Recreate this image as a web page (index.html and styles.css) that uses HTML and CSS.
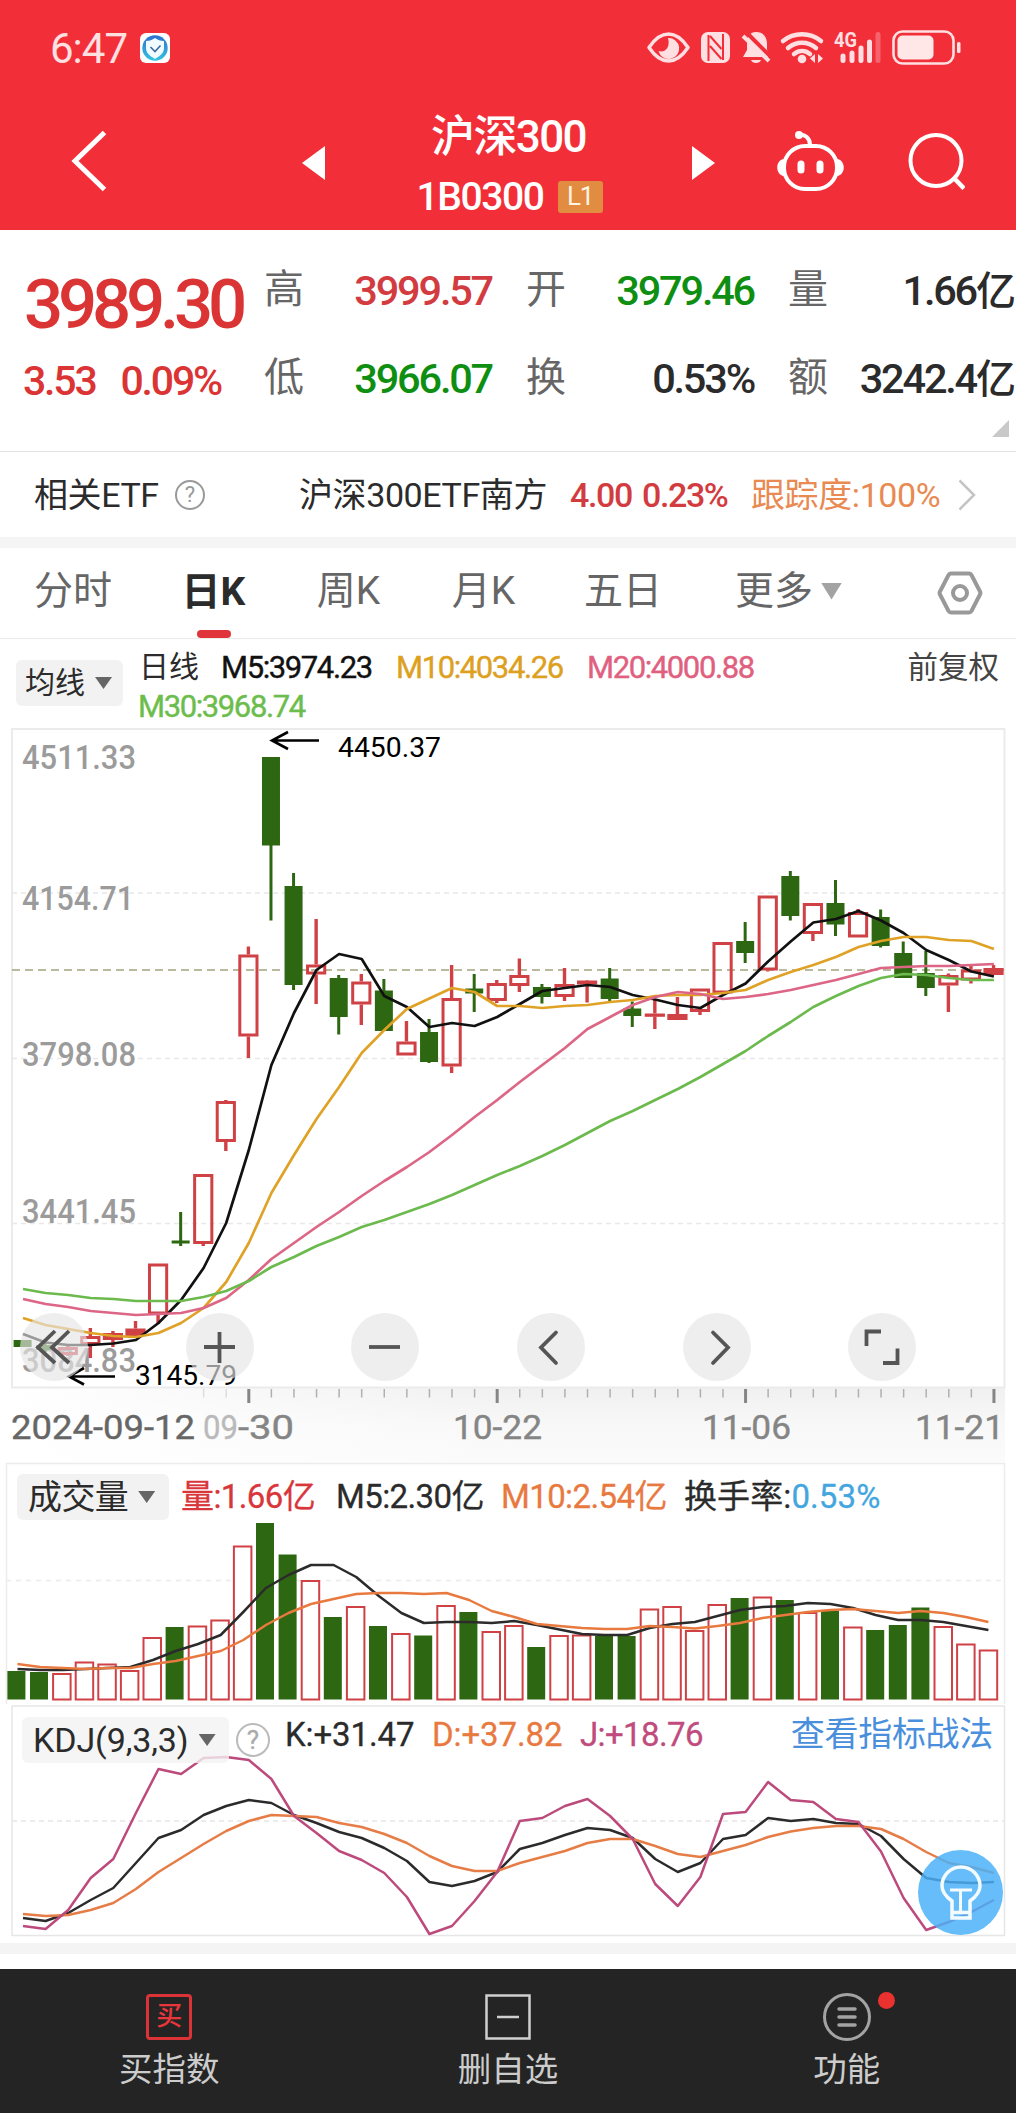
FILE: index.html
```html
<!DOCTYPE html>
<html lang="zh-CN">
<head>
  <meta charset="UTF-8">
  <title>沪深300</title>
  <link rel="stylesheet" href="styles.css">
</head>
<body>

  <header class="header">
    <div class="status-bar">
      <span class="clock">6:47</span>
      <svg class="shield" width="30" height="30" viewBox="0 0 30 30">
        <defs>
          <linearGradient id="shieldFill" x1="0" y1="0" x2="0" y2="1">
            <stop offset="0" stop-color="#2f6fd0"/>
            <stop offset="1" stop-color="#35c5e0"/>
          </linearGradient>
        </defs>
        <rect width="30" height="30" rx="6" fill="#fff"/>
        <circle cx="15" cy="15" r="12.7" fill="url(#shieldFill)"/>
        <path d="M15 5c3 2 5 3 9 3v7c0 5-4 8-9 11-5-3-9-6-9-11V8c4 0 6-1 9-3z" fill="#f2fbff"/>
        <path d="M10.5 14l4.5 4.500 5.500-6" fill="none" stroke="#3b6c9c" stroke-width="1.600"/>
      </svg>
      <svg class="status-icons" width="320" height="40" viewBox="642 28 320 40">
        <g fill="none" stroke="#ffdfe1" stroke-width="3.500">
          <path d="M649 47.500C661 29.500 676 29.500 688 47.500C676 65.500 661 65.500 649 47.500z" stroke-linejoin="round"/>
        </g>
        <path d="M668 38a10.500 10.500 0 1 1-9.500 13c7 2 12-4 9.500-13z" fill="#ffdfe1"/>
        <rect x="701" y="32" width="29" height="31" rx="7" fill="#ffdfe1"/>
        <path d="M708.500 35v26M723 34v26M710 36l11.500 13M710 46l11.500 13" stroke="#f22f39" stroke-width="2"/>
        <path d="M756 32c8 0 11 6 11 12v6l4 7h-28l4-7v-6c0-6 2-12 9-12zM751 60h10c-1 4-9 4-10 0z" fill="#ffdfe1"/>
        <path d="M747 33l26 26" stroke="#f22f39" stroke-width="4"/>
        <path d="M743 36l26 25" stroke="#ffdfe1" stroke-width="4"/>
        <g fill="none" stroke="#ffdfe1" stroke-width="4.500" stroke-linecap="round">
          <path d="M783 41c11-9 27-9 38 0M788 48c8-7 20-7 28 0M794 54c5-4 11-4 16 0"/>
        </g>
        <circle cx="802" cy="59" r="4.300" fill="#ffdfe1"/>
        <path d="M815 54v9l-5-4.500zM818 54v9l5-4.500z" fill="#ffdfe1"/>
        <text x="834" y="46.500" class="net" textLength="23" lengthAdjust="spacingAndGlyphs">4G</text>
        <g stroke="#ffdfe1" stroke-width="5" stroke-linecap="round">
          <path d="M843 56v4.500M852 53v7.500M861 48v12.500M869.500 42v18.500"/>
          <path d="M878 34.500v26" opacity=".3"/>
        </g>
        <rect x="893.500" y="31.500" width="60" height="32" rx="9" fill="none" stroke="#ffdfe1" stroke-width="2.600"/>
        <rect x="897.500" y="35.500" width="36" height="24" rx="5" fill="#ffe6e7"/>
        <rect x="957" y="42" width="3.500" height="11" rx="1.500" fill="#ffdfe1"/>
      </svg>
    </div>

    <div class="nav">
      <svg width="36" height="64" viewBox="0 0 36 64"><path d="M33.500 3.500L4 32l29.500 28.500" fill="none" stroke="#fff" stroke-width="5"/></svg>
      <svg class="prev" width="23" height="34" viewBox="0 0 23 34"><path d="M23 0v34L0 17z" fill="#fff"/></svg>
      <div class="nav-title">
        <div class="name">沪深300</div>
        <div class="code">1B0300<span class="level">L1</span></div>
      </div>
      <svg class="next" width="23" height="34" viewBox="0 0 23 34"><path d="M0 0v34l23-17z" fill="#fff"/></svg>
      <svg class="robot" width="68" height="62" viewBox="776 131 68 62">
        <g fill="none" stroke="#fff" stroke-width="4">
          <rect x="784" y="147" width="53" height="43" rx="21"/>
          <path d="M799 136c6-1 11 3 11 10"/>
        </g>
        <circle cx="799" cy="136" r="4" fill="#fff"/>
        <path d="M784 160c-9 1-9 16 0 17zM837 160c9 1 9 16 0 17z" fill="#fff"/>
        <path d="M801 165v6M820 165v6" stroke="#fff" stroke-width="7" stroke-linecap="round"/>
      </svg>
      <svg class="search" width="58" height="58" viewBox="907 133 58 58">
        <circle cx="936" cy="161.500" r="25.500" fill="none" stroke="#fff" stroke-width="4"/>
        <path d="M953 178l11 11.500" stroke="#fff" stroke-width="4.500"/>
      </svg>
    </div>
  </header>

  <section class="quote">
    <div class="quote-main">
      <div class="price">3989.30</div>
      <div class="change"><span>3.53</span><span>0.09%</span></div>
    </div>
    <div class="quote-grid">
      <div class="cell"><span class="label">高</span><span class="up">3999.57</span></div>
      <div class="cell"><span class="label">开</span><span class="down">3979.46</span></div>
      <div class="cell"><span class="label">量</span><span>1.66<em>亿</em></span></div>
      <div class="cell"><span class="label">低</span><span class="down">3966.07</span></div>
      <div class="cell"><span class="label">换</span><span>0.53%</span></div>
      <div class="cell"><span class="label">额</span><span>3242.4<em>亿</em></span></div>
    </div>
    <svg class="corner" width="17" height="17" viewBox="0 0 17 17"><path d="M17 0v17H0z" fill="#c9c9c9"/></svg>
  </section>

  <section class="etf">
    <span class="etf-label">相关ETF</span>
    <span class="help">?</span>
    <span class="etf-name">沪深300ETF南方</span>
    <span class="etf-price">4.00</span>
    <span class="etf-rate">0.23%</span>
    <span class="etf-track">跟踪度:100%</span>
    <svg width="18" height="32" viewBox="0 0 18 32"><path d="M1.500 1.500L16 16 1.500 30.500" fill="none" stroke="#c4c4c4" stroke-width="2.500"/></svg>
  </section>

  <nav class="tabs">
    <div class="tab tab-wide">分时</div>
    <div class="tab active">日K</div>
    <div class="tab">周K</div>
    <div class="tab">月K</div>
    <div class="tab tab-five">五日</div>
    <div class="tab-more">更多<i class="caret"></i></div>
    <svg class="setting" width="46" height="44" viewBox="0 0 46 44">
      <path d="M14 2.500h18q1.500 0 2.500 1.500l8.500 16.500q.8 1.500 0 3L34.500 40q-1 1.500-2.500 1.500H14q-1.500 0-2.500-1.500L3 23.500q-.8-1.500 0-3L11.500 4q1-1.500 2.500-1.500z" fill="none" stroke="#999" stroke-width="4"/>
      <circle cx="23" cy="22" r="7" fill="none" stroke="#999" stroke-width="4"/>
    </svg>
  </nav>

  <section class="ma-bar">
    <div class="picker">均线<i class="caret"></i></div>
    <div class="ma-list">
      <span class="period">日线</span>
      <span class="m5">M5:3974.23</span>
      <span class="m10">M10:4034.26</span>
      <span class="m20">M20:4000.88</span>
      <span class="m30">M30:3968.74</span>
    </div>
    <div class="adjust">前复权</div>
  </section>

  <section class="panel">
    <svg id="kline" width="1016" height="734" viewBox="0 728 1016 734"></svg>
    <div class="tools">
      <button><svg viewBox="0 0 68 68"><path d="M35 18L18 34.500 35 50M49 18L32 34.500 49 50"/></svg></button>
      <button><svg viewBox="0 0 68 68"><path d="M18 34h31M33.500 19v31"/></svg></button>
      <button><svg viewBox="0 0 68 68"><path d="M18 34h31"/></svg></button>
      <button><svg viewBox="0 0 68 68"><path d="M39 19.500L24 34.500 39 50" stroke-linecap="round"/></svg></button>
      <button><svg viewBox="0 0 68 68"><path d="M30 19.500L45 34.500 30 50" stroke-linecap="round"/></svg></button>
      <button><svg viewBox="0 0 68 68"><path d="M18.500 33V18.500H33M49.500 35.500V50H35"/></svg></button>
    </div>
  </section>

  <section class="panel volume">
    <svg id="volume" width="1016" height="242" viewBox="0 1462 1016 242"></svg>
    <div class="panel-head">
      <div class="picker">成交量<i class="caret"></i></div>
      <span class="v-now">量:1.66亿</span>
      <span class="v-m5">M5:2.30亿</span>
      <span class="v-m10">M10:2.54亿</span>
      <span class="v-turn">换手率:<b>0.53%</b></span>
    </div>
  </section>

  <section class="panel kdj">
    <svg id="kdj" width="1016" height="236" viewBox="0 1704 1016 236"></svg>
    <div class="panel-head">
      <div class="picker">KDJ(9,3,3)<i class="caret"></i></div>
      <span class="help">?</span>
      <span class="k">K:+31.47</span>
      <span class="d">D:+37.82</span>
      <span class="j">J:+18.76</span>
      <a class="guide">查看指标战法</a>
    </div>
    <div class="tip">
      <svg width="42" height="56" viewBox="0 0 42 56">
        <g fill="none" stroke="#f4fbff" stroke-width="3.500">
          <path d="M12 40V36C5 31 2 27 2 21a19 19 0 0 1 38 0c0 6-3 10-10 15v17H12V40zM12 47.500h18"/>
          <path d="M10 25h22M20.500 25v22" stroke-width="3"/>
        </g>
      </svg>
    </div>
  </section>

  <footer class="footer">
    <div class="action">
      <span class="icon-buy">买</span>
      <span>买指数</span>
    </div>
    <div class="action">
      <svg width="46" height="46" viewBox="0 0 46 46"><path d="M1.500 1.500h43v43h-43zM12 23h22" fill="none" stroke="#cfcfcf" stroke-width="2.500"/></svg>
      <span>删自选</span>
    </div>
    <div class="action">
      <div class="icon-menu">
        <svg width="50" height="50" viewBox="0 0 50 50">
          <circle cx="25" cy="25" r="22.500" fill="none" stroke="#a3a3a3" stroke-width="3"/>
          <path d="M17 17h16M17 25h16M17 33h16" stroke="#a3a3a3" stroke-width="3.500" stroke-linecap="round"/>
        </svg>
        <i class="dot"></i>
      </div>
      <span>功能</span>
    </div>
  </footer>

  <script src="chart.js"></script>
</body>
</html>
```
FILE: styles.css
```css
body {
  margin: 0;
  width: 1016px;
  background-color: #fff;
  color: #2b2b2b;
  font-family: Roboto, "Noto Sans CJK SC", sans-serif;
}
svg {
  display: block;
  flex: none;
}
span, a {
  white-space: nowrap;
}

/* header */
.header {
  height: 230px;
  background-color: #f22f39;
  color: #fff;
}
.status-bar {
  display: flex;
  align-items: center;
  height: 96px;
}
.clock {
  width: 88px;
  padding-left: 50px;
  font-size: 42px;
  letter-spacing: -1px;
  color: #ffe0e1;
}
.shield {
  margin-left: 2px;
}
.status-icons {
  margin-left: auto;
  margin-right: 54px;
}
.net {
  font-size: 21px;
  font-weight: 700;
  fill: #ffdfe1;
}
.nav {
  display: flex;
  align-items: center;
  height: 130px;
  padding-left: 71px;
}
.prev {
  margin-left: 195px;
  margin-top: 3px;
}
.nav-title {
  width: 367px;
  text-align: center;
}
.name {
  font-size: 44px;
  line-height: 60px;
  margin-top: 12px;
  letter-spacing: -1.6px;
  font-weight: 500;
}
.code {
  display: flex;
  align-items: center;
  justify-content: center;
  font-size: 39px;
  line-height: 60px;
  font-weight: 500;
  letter-spacing: -1.4px;
  padding-left: 2px;
}
.level {
  width: 45px;
  height: 32px;
  margin-left: 14px;
  border-radius: 3px;
  background-color: #e28c42;
  color: #fff3e2;
  font-size: 26px;
  font-weight: 400;
  line-height: 31px;
}
.next {
  margin-top: 3px;
}
.robot {
  margin-left: 61px;
}
.search {
  margin-left: 63px;
}

/* quote */
.quote {
  display: flex;
  height: 221px;
  border-bottom: 1px solid #e2e2e2;
}
.quote-main {
  width: 240px;
  padding-left: 24px;
  color: #db3434;
}
.price {
  margin-top: 35px;
  font-size: 69px;
  line-height: 80px;
  font-weight: 500;
  letter-spacing: -5.2px;
}
.change {
  display: flex;
  gap: 25px;
  margin: 11px 0 0 -1px;
  font-size: 41px;
  line-height: 50px;
  font-weight: 500;
  letter-spacing: -2.2px;
}
.quote-grid {
  display: grid;
  grid-template-columns: repeat(3, 228px);
  grid-auto-rows: 88px;
  column-gap: 34px;
  margin-top: 17px;
}
.cell {
  display: flex;
  align-items: center;
  justify-content: space-between;
  font-size: 41.5px;
  line-height: 50px;
  font-weight: 500;
  letter-spacing: -2.2px;
}
.cell em {
  font-style: normal;
  font-size: 40px;
  letter-spacing: 0;
}
.label {
  margin-bottom: 3px;
  color: #666;
  font-size: 40px;
  font-weight: 400;
  letter-spacing: 0;
}
.up {
  color: #d23c40;
}
.down {
  color: #0f8f12;
}
.corner {
  align-self: flex-end;
  margin: 0 0 14px -24px;
}

/* related etf */
.etf {
  display: flex;
  align-items: center;
  height: 85px;
  padding-left: 34px;
  font-size: 34px;
  line-height: 42px;
  letter-spacing: -.4px;
  border-bottom: 11px solid #f5f5f5;
}
.help {
  box-sizing: border-box;
  width: 30px;
  height: 30px;
  border: 2px solid #999;
  border-radius: 50%;
  font-size: 22px;
  line-height: 26px;
  letter-spacing: 0;
  text-align: center;
  color: #999;
}
.etf-label {
  width: 141px;
}
.etf-name {
  width: 271px;
  margin-left: 94px;
}
.etf-price {
  width: 72px;
  color: #d23c40;
  font-weight: 500;
  letter-spacing: -1.4px;
}
.etf-rate {
  width: 109px;
  color: #d23c40;
  font-weight: 500;
  letter-spacing: -1.4px;
}
.etf-track {
  width: 207px;
  color: #e88a52;
}

/* tabs */
.tabs {
  display: flex;
  align-items: center;
  height: 90px;
  border-bottom: 1px solid #ebebeb;
  font-size: 39px;
  line-height: 58px;
  color: #666;
}
.tab {
  box-sizing: border-box;
  display: flex;
  align-items: center;
  justify-content: center;
  width: 135px;
  height: 90px;
  padding-bottom: 4px;
}
.tab-wide {
  width: 146px;
}
.tab-five {
  padding-left: 9px;
}
.active {
  flex-direction: column;
  justify-content: flex-end;
  padding-bottom: 0;
  color: #2b2b2b;
  font-weight: 700;
}
.active::after {
  content: "";
  width: 34px;
  height: 8px;
  margin-top: 9px;
  border-radius: 4px;
  background-color: #e0343a;
}
.tab-more {
  display: flex;
  align-items: center;
  width: 202px;
  padding: 0 0 4px 49px;
}
.caret {
  width: 17px;
  height: 12px;
  margin-left: 10px;
  background-color: #666;
  clip-path: polygon(0 0, 100% 0, 50% 100%);
}
.tab-more .caret {
  width: 21px;
  height: 17px;
  margin-left: 8px;
  background-color: #a3a3a3;
}

/* moving averages */
.ma-bar {
  display: flex;
  height: 89px;
  padding: 0 17px;
}
.picker {
  box-sizing: border-box;
  display: flex;
  align-items: center;
  height: 46px;
  border-radius: 6px;
  background-color: #f2f2f2;
  color: #2b2b2b;
}
.ma-bar .picker {
  width: 107px;
  margin: 21px 0 0 -1px;
  padding-left: 9px;
  font-size: 30px;
  line-height: 44px;
}
.ma-list {
  display: flex;
  flex-wrap: wrap;
  align-content: flex-start;
  width: 700px;
  margin-left: 15px;
  padding-top: 9px;
  font-size: 31px;
  line-height: 39px;
  letter-spacing: -1.4px;
}
.period {
  width: 82px;
  padding-left: 1px;
  font-size: 30px;
  line-height: 37px;
  letter-spacing: 0;
}
.m5 {
  width: 175px;
  color: #111;
}
.m10 {
  width: 191px;
  color: #dda01f;
}
.m20 {
  width: 200px;
  color: #df607f;
}
.m30 {
  color: #6cbd4c;
}
.m5, .m10, .m20, .m30 {
  -webkit-text-stroke: .4px currentColor;
}
.adjust {
  margin-left: auto;
  padding-top: 4px;
  font-size: 30.5px;
  color: #444;
}

/* chart panels: drawing and its controls share one grid cell */
.panel {
  display: grid;
}
.panel > * {
  grid-area: 1 / 1;
}
.tools {
  display: flex;
  align-self: start;
  gap: 97.7px;
  margin: 584.5px 0 0 20px;
}
.tools button {
  width: 68px;
  height: 68px;
  padding: 0;
  border: none;
  border-radius: 50%;
  background-color: rgba(229, 229, 229, .65);
}
.tools svg {
  fill: none;
  stroke: #555;
  stroke-width: 3.8;
}
.panel-head {
  display: flex;
  align-self: start;
  font-size: 33px;
  line-height: 44px;
  letter-spacing: -.6px;
}
.panel-head span {
  -webkit-text-stroke: .3px currentColor;
}
.volume .panel-head {
  margin: 12px 0 0 17px;
}
.volume .picker {
  width: 152px;
  padding-left: 11px;
  font-size: 34px;
}
.v-now {
  width: 155px;
  margin-left: 12px;
  color: #d9363b;
}
.v-m5 {
  width: 165px;
}
.v-m10 {
  width: 183px;
  color: #e8793f;
}
.v-now, .v-m5, .v-m10, .v-turn {
  padding-top: 1px;
}
.v-turn {
  letter-spacing: .1px;
}
.v-turn b {
  font-weight: 400;
  color: #43a6de;
}
.kdj .panel-head {
  margin: 13px 23px 0 22px;
}
.kdj .picker {
  width: 207px;
  padding-left: 11px;
  font-size: 34px;
  letter-spacing: -.1px;
  background-color: rgba(242, 242, 242, .8);
}
.kdj .help {
  width: 34px;
  height: 34px;
  margin: 6px 0 0 7px;
  border-color: #bbb;
  font-size: 26px;
  line-height: 30px;
  color: #aaa;
}
.k, .d, .j {
  margin-top: -4px;
  letter-spacing: -.1px;
}
.k {
  width: 147px;
  margin-left: 15px;
}
.d {
  width: 148px;
  color: #e8793f;
}
.j {
  color: #c04b7c;
  letter-spacing: -.6px;
}
.guide {
  margin: -5px 0 0 auto;
  font-size: 34px;
  letter-spacing: -.3px;
  color: #4a8fdc;
}
.tip {
  display: flex;
  align-items: center;
  justify-content: center;
  align-self: end;
  justify-self: end;
  width: 85px;
  height: 85px;
  margin: 0 13px 5px 0;
  border-radius: 50%;
  background-color: rgba(74, 176, 248, .84);
}

/* footer */
.kdj {
  border-bottom: 15px solid #fff;
}
.kdj::after {
  content: "";
  grid-area: 2 / 1;
  height: 14px;
  background: linear-gradient(#fff 3px, #f4f4f4 3px);
}
.footer {
  display: flex;
  justify-content: space-around;
  height: 144px;
  background-color: #242424;
  color: #ccc;
  font-size: 33.5px;
}
.action {
  display: flex;
  flex-direction: column;
  align-items: center;
  flex: 1;
  padding-top: 25px;
}
.action > span:last-child {
  margin-top: 4px;
  line-height: 52px;
}
.icon-buy {
  box-sizing: border-box;
  width: 46px;
  height: 46px;
  border: 3px solid #dc3338;
  border-radius: 4px;
  color: #e8363b;
  font-size: 26px;
  font-weight: 500;
  line-height: 39px;
  text-align: center;
}
.icon-menu {
  position: relative;
  margin: -2px 0;
}
.dot {
  position: absolute;
  left: 56px;
  top: 0;
  width: 17px;
  height: 17px;
  border-radius: 50%;
  background-color: #e9312f;
}

/* chart text */
.axis-y {
  font-size: 33px;
  font-weight: 500;
  fill: #9b9b9b;
}
.axis-x {
  font-size: 33px;
  fill: #858585;
  stroke: #858585;
  stroke-width: .4px;
}
.axis-x.start {
  fill: #666;
  stroke: #666;
}
.mark {
  font-size: 28px;
  fill: #000;
}
```
FILE: chart.js
```js
const RED = '#cf4145';
const GREEN = '#2e6711';
const STEP = 22.58;

// [direction, high, body top, body bottom, low]
const candles = [
  ['g', 1340, 1340, 1347, 1347], ['g', 1342, 1345, 1350, 1352], ['r', 1345, 1347, 1355, 1356],
  ['r', 1328, 1336, 1345, 1358], ['r', 1331, 1333, 1340, 1347], ['r', 1321, 1328.5, 1336, 1337],
  ['r', 1263.5, 1263.5, 1314.5, 1324], ['g', 1212, 1240.5, 1243.5, 1246], ['r', 1174, 1174, 1244, 1246],
  ['r', 1100, 1101, 1142, 1151], ['r', 946.5, 954.5, 1036.5, 1058], ['g', 757, 757, 845.5, 920.5],
  ['g', 873, 886, 985, 990], ['r', 919, 964.5, 974.5, 1004], ['g', 975, 978, 1017, 1034.5],
  ['r', 974, 981.5, 1004.5, 1025], ['g', 979, 990.5, 1031, 1031], ['r', 1021, 1041.5, 1055.5, 1055.5],
  ['g', 1019, 1032, 1062, 1063], ['r', 965, 998, 1066.5, 1073], ['g', 974, 988.5, 993.5, 1012],
  ['r', 980, 983, 1001, 1003], ['r', 958.5, 975, 986, 992], ['g', 984, 987, 997, 1003.5],
  ['r', 968, 984, 997, 1001], ['r', 980, 980.5, 984.5, 1002.5], ['g', 968, 978.5, 999, 1001],
  ['g', 1001.5, 1008.5, 1016, 1027], ['r', 1000, 1013.5, 1016.5, 1029], ['r', 997, 1014, 1020, 1020],
  ['r', 988.5, 988.5, 1012, 1015], ['r', 942, 942, 993.5, 993.5], ['g', 922, 941, 953, 963],
  ['r', 895.5, 895.5, 970.5, 971.5], ['g', 871, 876, 916, 920.5], ['r', 903, 903, 934, 941],
  ['g', 880, 903, 924.5, 936], ['r', 909, 912, 937.5, 937.5], ['g', 909.5, 917, 946, 947.5],
  ['g', 941.5, 953, 978, 978], ['g', 951, 973, 988, 996], ['r', 973.5, 975, 985.5, 1012],
  ['r', 965.5, 969.5, 980.5, 983.5], ['r', 965, 968, 975, 975]
];

const ma5 = [1334, 1342.5, 1345, 1345, 1343.5, 1340, 1323, 1300, 1268, 1223, 1150, 1065, 1013, 970, 954, 959, 996, 1007, 1027, 1023, 1026, 1017, 1004, 991, 988, 985, 987, 995, 999.5, 1005, 1008, 995, 983.5, 961.5, 941.5, 922.5, 919, 911, 920.5, 933, 950, 960, 971.5, 976.5];
const ma10 = [1318, 1325, 1329, 1333, 1336, 1337, 1333, 1323, 1308, 1282, 1243, 1193, 1155, 1119, 1087, 1053, 1030, 1009, 998.5, 988, 992, 1006, 1006, 1008, 1006, 1005, 1002, 1000, 996, 995, 995, 993, 990, 980, 972, 965, 957, 947, 941, 937, 937, 940, 941, 949];
const ma20 = [1299, 1304, 1307, 1311, 1313, 1315, 1314, 1313, 1308, 1298, 1280, 1259, 1243, 1227, 1212, 1196, 1181, 1167, 1152, 1135, 1117, 1100, 1082, 1065, 1048, 1029, 1017, 1005, 997, 992, 994, 999, 997, 994, 990, 985, 980, 974, 968, 967, 966, 966, 965, 964];
const ma30 = [1289, 1293, 1295, 1298, 1299, 1301, 1301, 1301, 1297, 1291, 1281, 1267, 1257, 1246, 1237, 1227, 1220, 1212, 1204, 1195, 1185, 1175, 1166, 1156, 1145, 1133, 1121, 1111, 1100, 1089, 1077, 1064, 1051, 1036, 1022, 1007, 996, 986, 978, 974, 975, 978, 980, 980];

const volumes = [1671, 1672, 1673, 1661.5, 1663.5, 1670, 1637, 1627, 1625.5, 1619.5, 1545.5, 1523, 1554.5, 1580, 1617, 1606, 1626, 1633, 1635.5, 1605, 1612, 1631, 1625, 1647, 1635, 1634.5, 1636, 1636, 1608.5, 1606, 1630, 1604, 1598, 1596.5, 1600, 1612, 1611, 1626.5, 1630, 1625, 1607.5, 1626, 1643.5, 1649.5];
const vol5 = [1669, 1670, 1670, 1669, 1668, 1667, 1660, 1651, 1644, 1635, 1612, 1588, 1575, 1565, 1565, 1577, 1596, 1613, 1623, 1622, 1622, 1623, 1621, 1625, 1629.5, 1634, 1635, 1635, 1628, 1624, 1622, 1616, 1610, 1607, 1606, 1603, 1604, 1608, 1615, 1620, 1620, 1622, 1626, 1630];
const vol10 = [1664, 1667, 1668, 1669, 1668, 1668, 1664, 1661, 1656, 1651, 1640, 1625, 1613, 1604, 1599, 1594, 1593, 1593, 1594, 1593, 1600, 1611, 1617, 1624, 1626, 1628, 1629, 1629, 1626, 1627, 1628.5, 1626, 1623, 1618, 1615, 1612, 1610, 1609, 1611, 1613, 1611, 1613, 1617, 1622];

const kLine = [1918, 1921, 1913, 1900, 1888, 1863, 1838, 1830, 1815, 1806, 1800, 1803, 1815, 1823, 1832, 1838, 1848, 1861, 1882, 1886, 1881, 1872, 1849, 1843, 1835, 1828, 1830, 1838, 1859, 1872, 1863, 1839, 1835, 1818, 1821, 1819, 1823, 1824, 1836, 1859, 1878, 1882, 1883, 1882];
const dLine = [1914, 1916, 1915, 1910, 1903, 1889, 1872, 1858, 1844, 1831, 1821, 1815, 1816, 1817, 1823, 1827, 1834, 1843, 1856, 1866, 1871, 1871, 1863, 1857, 1851, 1843, 1839, 1839, 1846, 1854, 1857, 1851, 1845, 1837, 1831.5, 1828, 1826, 1826, 1829, 1839, 1852, 1863, 1867, 1873];
const jLine = [1926, 1929, 1910, 1878, 1859, 1813, 1769, 1774, 1758, 1757, 1760, 1779, 1816, 1833, 1851, 1860, 1873, 1897, 1934, 1926, 1901, 1872, 1821, 1818, 1806, 1799, 1816, 1839, 1884, 1906, 1877, 1814, 1812, 1782, 1800, 1802, 1819, 1822, 1851.5, 1898, 1930, 1922, 1912, 1900];

function rect(x, y, w, h, attrs) {
  return `<rect x="${x}" y="${y}" width="${w}" height="${h}" ${attrs}/>`;
}

function line(x1, y1, x2, y2, color, width, dash) {
  return `<path d="M${x1} ${y1}L${x2} ${y2}" stroke="${color}" stroke-width="${width}" ${dash ? `stroke-dasharray="${dash}"` : ''}/>`;
}

function curve(data, x0, color, width) {
  const points = data.map((y, i) => `${(x0 + i * STEP).toFixed(1)},${y}`).join(' ');
  return `<polyline points="${points}" fill="none" stroke="${color}" stroke-width="${width}" stroke-linejoin="round"/>`;
}

function text(str, x, y, width, cls, attrs) {
  return `<text x="${x}" y="${y}" textLength="${width}" lengthAdjust="spacingAndGlyphs" class="${cls}" ${attrs || ''}>${str}</text>`;
}

function drawKline() {
  let out = `<defs>
    <linearGradient id="axisX"><stop offset="0" stop-color="#fff"/><stop offset=".25" stop-color="#fff" stop-opacity=".5"/><stop offset=".5" stop-color="#fff" stop-opacity="0"/></linearGradient>
    <linearGradient id="axisY" x1="0" y1="0" x2="0" y2="1"><stop offset="0" stop-color="#f0f0f0"/><stop offset=".5" stop-color="#f8f8f8"/><stop offset="1" stop-color="#fbfbfb"/></linearGradient>
  </defs>`;
  out += rect(12, 1388, 993, 74, 'fill="url(#axisY)"');
  out += rect(11, 1388, 995, 74, 'fill="url(#axisX)"');
  out += rect(12, 729, 992.5, 658.5, 'fill="none" stroke="#ebebeb" stroke-width="2"');
  [893, 1058.5, 1223.5].forEach(y => out += line(12, y, 1004, y, '#e8e8e8', 1.3, '5 4'));
  out += line(12, 970, 1004, 970, '#a3a37c', 1.7, '8 5');

  out += text('4511.33', 22, 768.5, 114, 'axis-y');
  out += text('4154.71', 22, 910, 112, 'axis-y');
  out += text('3798.08', 22, 1066, 114, 'axis-y');
  out += text('3441.45', 22, 1223, 114, 'axis-y');
  out += text('3084.83', 22, 1372, 114, 'axis-y');

  candles.forEach(([dir, high, top, bottom, low], i) => {
    const x = 22.6 + i * STEP;
    if (dir === 'g') {
      out += line(x, high, x, low, GREEN, 3);
      out += rect(x - 9, top, 18, bottom - top, `fill="${GREEN}"`);
    } else {
      // thin bodies have no room for a hollow middle
      const h = bottom - top;
      out += line(x, high, x, top, RED, 3.4) + line(x, bottom, x, low, RED, 3.4);
      out += rect(x - 8.6, top + 1.5, 17.2, Math.max(h - 3, .3), `fill="${h < 8 ? RED : 'none'}" stroke="${RED}" stroke-width="3"`);
    }
  });

  out += curve(ma5, 23, '#111', 2.7);
  out += curve(ma10, 23, '#dfa226', 2.7);
  out += curve(ma20, 23, '#dd6586', 2.7);
  out += curve(ma30, 23, '#6cba4e', 2.7);

  // high and low marks
  out += '<path d="M319 740.500H272M288 732l-16 8.500 16 8.500M115 1376.500H70M84 1368l-15 8.500 15 8" fill="none" stroke="#000" stroke-width="2.600"/>';
  out += text('4450.37', 338, 757, 103, 'mark');
  out += text('3145.79', 135, 1385, 102, 'mark');

  for (let i = 8; i < 44; i++) {
    const x = 23 + i * STEP;
    const major = i % 11 === 10;
    out += line(x, 1389, x, major ? 1403 : 1397.5, major ? '#858585' : (i < 10 ? '#ddd' : '#b0b0b0'), major ? 3 : 1.5);
  }
  out += text('2024-09-12', 11, 1439, 184, 'axis-x start');
  out += text('09', 203, 1439, 35, 'axis-x', 'opacity=".55"');
  out += text('-30', 238, 1439, 56, 'axis-x');
  out += text('10-22', 453, 1439, 89, 'axis-x');
  out += text('11-06', 702, 1439, 89, 'axis-x');
  out += text('11-21', 915, 1439, 89, 'axis-x');
  document.getElementById('kline').innerHTML = out;
}

function drawVolume() {
  let out = '<path d="M6.500 1704V1463.500H1004.500V1704" fill="none" stroke="#ececec" stroke-width="1.500"/>';
  out += line(6, 1580.5, 1004, 1580.5, '#ebebeb', 1.3, '5 5');
  volumes.forEach((top, i) => {
    const x = 16.4 + i * 22.6;
    if (candles[i][0] === 'g') {
      out += rect(x - 9, top, 18, 1699.5 - top, `fill="${GREEN}"`);
    } else {
      out += rect(x - 8.5, top + 1, 17.5, 1698.5 - top, `fill="#fff" stroke="${RED}" stroke-width="2"`);
    }
  });
  out += curve(vol5, 17.5, '#2b2b2b', 2.5);
  out += curve(vol10, 17.5, '#e8793f', 2.5);
  document.getElementById('volume').innerHTML = out;
}

function drawKdj() {
  let out = rect(12, 1706, 992.5, 229.5, 'fill="none" stroke="#e6e6e6" stroke-width="1.500"');
  out += line(12, 1821, 1004, 1821, '#e6e6e6', 1.3, '5 4');
  out += curve(kLine, 23, '#2b2b2b', 2.5);
  out += curve(dLine, 23, '#e67c46', 2.5);
  out += curve(jLine, 23, '#bd4a7c', 2.5);
  document.getElementById('kdj').innerHTML = out;
}

drawKline();
drawVolume();
drawKdj();
```
